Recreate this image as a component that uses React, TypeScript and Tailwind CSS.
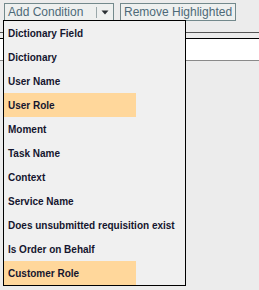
const items = [
  { label: 'Dictionary Field', selected: false },
  { label: 'Dictionary', selected: false },
  { label: 'User Name', selected: false },
  { label: 'User Role', selected: true },
  { label: 'Moment', selected: false },
  { label: 'Task Name', selected: false },
  { label: 'Context', selected: false },
  { label: 'Service Name', selected: false },
  { label: 'Does unsubmitted requisition exist', selected: false },
  { label: 'Is Order on Behalf', selected: false },
  { label: 'Customer Role', selected: true },
]

export default function App() {
  return (
    <div
      className="relative w-[259px] h-[290px] overflow-hidden bg-[#ececec]"
      style={{ fontFamily: '"Liberation Sans", Arial, sans-serif' }}
    >
      {/* Toolbar */}
      <div className="flex items-start gap-[6px] pl-[4px] pt-[3px]">
        <button className="flex items-center h-[18px] w-[110px] border border-[#73898c] bg-[#eef0ef] pl-[3px] text-[12px] leading-none text-[#4d6a78]">
          <span className="flex-1 text-left">Add Condition</span>
          <span className="h-[11px] w-px bg-[#9aa8aa]" />
          <span className="flex w-[16px] justify-center">
            <svg width="8" height="5" viewBox="0 0 8 5">
              <path d="M0.5 0.5 H7.5 L4 4.5 Z" fill="#2a2f33" />
            </svg>
          </span>
        </button>
        <button className="flex items-center h-[18px] w-[116px] border border-[#73898c] bg-[#eef0ef] pl-[3px] text-[12px] leading-none text-[#4d6a78]">
          Remove Highlighted
        </button>
      </div>

      {/* Filter rule + input behind the menu */}
      <div className="mt-[11px] border-t border-[#555]" />
      <div className="mt-[5px] h-[23px] border-t border-b border-t-black border-b-[#8a8a8a] bg-white" />

      {/* Dropdown menu */}
      <div className="absolute left-[3px] top-[20px] w-[183px] border border-black bg-[#f0f0f0]">
        {items.map((item) => (
          <div
            key={item.label}
            className={`flex h-[24px] items-center pl-[4px] text-[10px] font-bold text-[#15152e] ${
              item.selected ? 'w-[132px] bg-[#ffd79b]' : ''
            }`}
          >
            {item.label}
          </div>
        ))}
      </div>
    </div>
  )
}
